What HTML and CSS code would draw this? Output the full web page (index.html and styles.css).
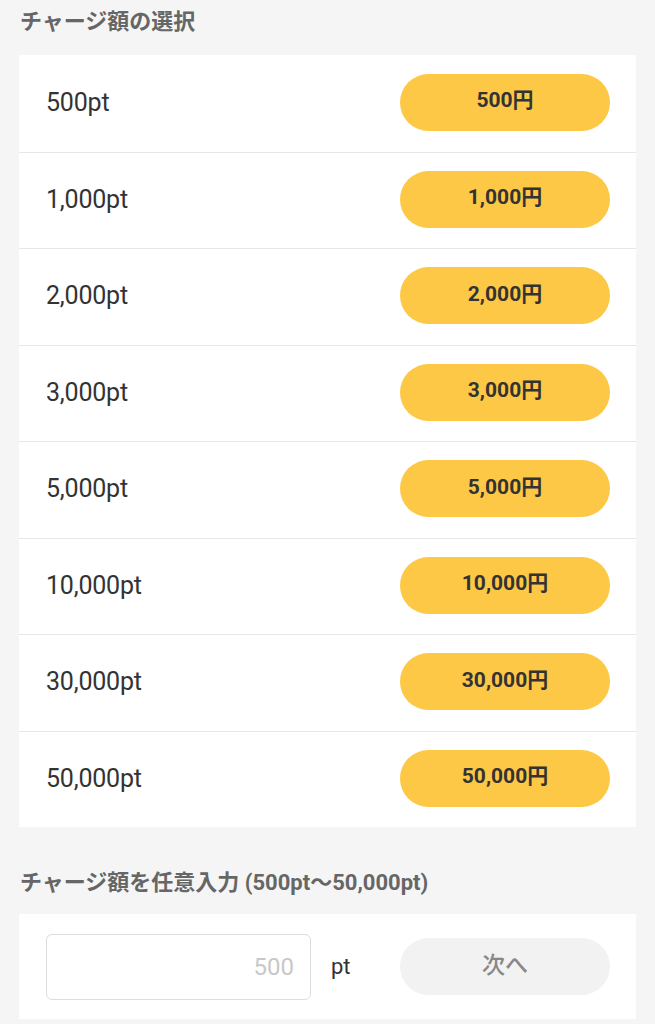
FILE: index.html
```html
<!DOCTYPE html>
<html lang="ja">

<head>
    <meta charset="UTF-8">
    <meta name="viewport" content="width=device-width, initial-scale=1.0">
    <title>チャージ</title>
    <link rel="stylesheet" href="styles.css">
</head>

<body>
    <div class="page">
        <h2 class="section-title">チャージ額の選択</h2>
        <div class="card">
            <div class="row"><span class="point">500pt</span><button class="pay">500円</button></div>
            <div class="row"><span class="point">1,000pt</span><button class="pay">1,000円</button></div>
            <div class="row"><span class="point">2,000pt</span><button class="pay">2,000円</button></div>
            <div class="row"><span class="point">3,000pt</span><button class="pay">3,000円</button></div>
            <div class="row"><span class="point">5,000pt</span><button class="pay">5,000円</button></div>
            <div class="row"><span class="point">10,000pt</span><button class="pay">10,000円</button></div>
            <div class="row"><span class="point">30,000pt</span><button class="pay">30,000円</button></div>
            <div class="row"><span class="point">50,000pt</span><button class="pay">50,000円</button></div>
        </div>

        <h2 class="section-title second">チャージ額を任意入力 (500pt〜50,000pt)</h2>
        <div class="card">
            <div class="input-row">
                <input type="text" class="amount" placeholder="500">
                <span class="unit">pt</span>
                <button class="next" disabled>次へ</button>
            </div>
        </div>
    </div>
</body>

</html>
```

FILE: styles.css
```css
body {
    font-family: Roboto, "Noto Sans CJK JP", sans-serif;
    background-color: #f5f5f5;
    margin: 0;
    padding: 0;
    color: #333;
}

.page {
    padding: 0 19px;
}

.section-title {
    margin: 0;
    padding: 6px 1px 0;
    height: 55px;
    box-sizing: border-box;
    font-size: 22px;
    line-height: 32px;
    font-weight: bold;
    color: #666;
    white-space: nowrap;
}

.section-title.second {
    height: 87px;
    padding-top: 40px;
}

.card {
    background-color: #fff;
}

.row {
    display: flex;
    align-items: center;
    justify-content: space-between;
    height: 96.5px;
    box-sizing: border-box;
    padding: 0 26px 2px 27px;
    border-top: 1px solid #e6e6e6;
}

.row:first-child {
    border-top: none;
}

.point {
    font-size: 25px;
    color: #333;
    letter-spacing: -0.2px;
}

.pay {
    width: 210px;
    height: 57px;
    padding: 0 0 3px;
    border: none;
    border-radius: 29px;
    background-color: #fdc846;
    color: #333;
    font-family: inherit;
    font-size: 21px;
    line-height: 1;
    font-weight: bold;
    cursor: pointer;
}

.input-row {
    display: flex;
    align-items: center;
    height: 105px;
    padding: 0 26px 0 27px;
}

.amount {
    width: 265px;
    height: 66px;
    box-sizing: border-box;
    border: 1px solid #ddd;
    border-radius: 6px;
    padding: 0 16px;
    text-align: right;
    font-family: inherit;
    font-size: 24px;
    color: #333;
}

.amount::placeholder {
    color: #c8c8c8;
}

.unit {
    margin-left: 20px;
    font-size: 22px;
    color: #333;
}

.next {
    margin-left: auto;
    width: 210px;
    height: 57px;
    padding: 0 0 3px;
    border: none;
    border-radius: 29px;
    background-color: #f2f2f2;
    color: #888;
    font-family: inherit;
    font-size: 23px;
    line-height: 1;
    font-weight: 500;
}
```
